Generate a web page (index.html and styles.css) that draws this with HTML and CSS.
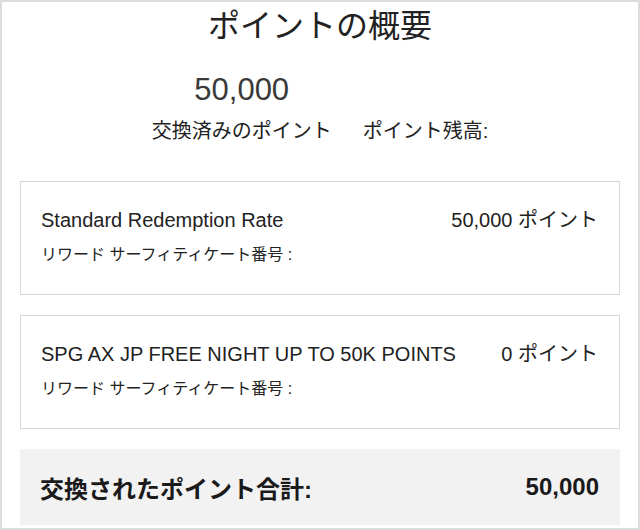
FILE: index.html
```html
<!DOCTYPE html>
<html lang="ja">
<head>
<meta charset="utf-8">
<title>ポイントの概要</title>
<link rel="stylesheet" href="styles.css">
</head>
<body>
<div class="frame">
  <h1 class="title">ポイントの概要</h1>
  <div class="stats">
    <div class="stat">
      <div class="stat-value">50,000</div>
      <div class="stat-label">交換済みのポイント</div>
    </div>
    <div class="stat">
      <div class="stat-value">&nbsp;</div>
      <div class="stat-label">ポイント残高:</div>
    </div>
  </div>
  <div class="items">
    <div class="card">
      <div class="card-row">
        <span class="card-name">Standard Redemption Rate</span>
        <span class="card-points">50,000 ポイント</span>
      </div>
      <div class="card-sub">リワード サーフィティケート番号 :</div>
    </div>
    <div class="card">
      <div class="card-row">
        <span class="card-name">SPG AX JP FREE NIGHT UP TO 50K POINTS</span>
        <span class="card-points">0 ポイント</span>
      </div>
      <div class="card-sub">リワード サーフィティケート番号 :</div>
    </div>
    <div class="total">
      <span class="total-label">交換されたポイント合計:</span>
      <span class="total-value">50,000</span>
    </div>
  </div>
</div>
</body>
</html>
```

FILE: styles.css
```css
html, body {
  margin: 0;
  padding: 0;
  background: #ffffff;
}

body {
  font-family: "Liberation Sans", Arial, "Noto Sans CJK JP", sans-serif;
  color: #222222;
}

.frame {
  box-sizing: border-box;
  width: 640px;
  height: 530px;
  border: 2px solid #dddddd;
  padding: 4px 18px 0;
  overflow: hidden;
}

.title {
  margin: 0;
  font-size: 32px;
  font-weight: normal;
  line-height: 40px;
  text-align: center;
  color: #222222;
}

.stats {
  display: flex;
  justify-content: center;
  gap: 31px;
  margin-top: 24px;
}

.stat {
  display: flex;
  flex-direction: column;
  align-items: center;
}

.stat-value {
  font-size: 31px;
  line-height: 40px;
  color: #3a3a3a;
}

.stat-label {
  margin-top: 6px;
  font-size: 20px;
  line-height: 30px;
  color: #222222;
}

.items {
  display: flex;
  flex-direction: column;
  gap: 20px;
  margin-top: 35px;
}

.card {
  border: 1px solid #d6d6d6;
  padding: 23px 21px 27px 20px;
}

.card-row {
  display: flex;
  justify-content: space-between;
  font-size: 20px;
  line-height: 30px;
}

.card-sub {
  margin-top: 8px;
  font-size: 16px;
  line-height: 24px;
}

.total {
  display: flex;
  justify-content: space-between;
  align-items: center;
  background: #f2f2f2;
  height: 76px;
  padding: 0 21px 0 20px;
  font-size: 24px;
  font-weight: bold;
  color: #1a1a1a;
}
```
